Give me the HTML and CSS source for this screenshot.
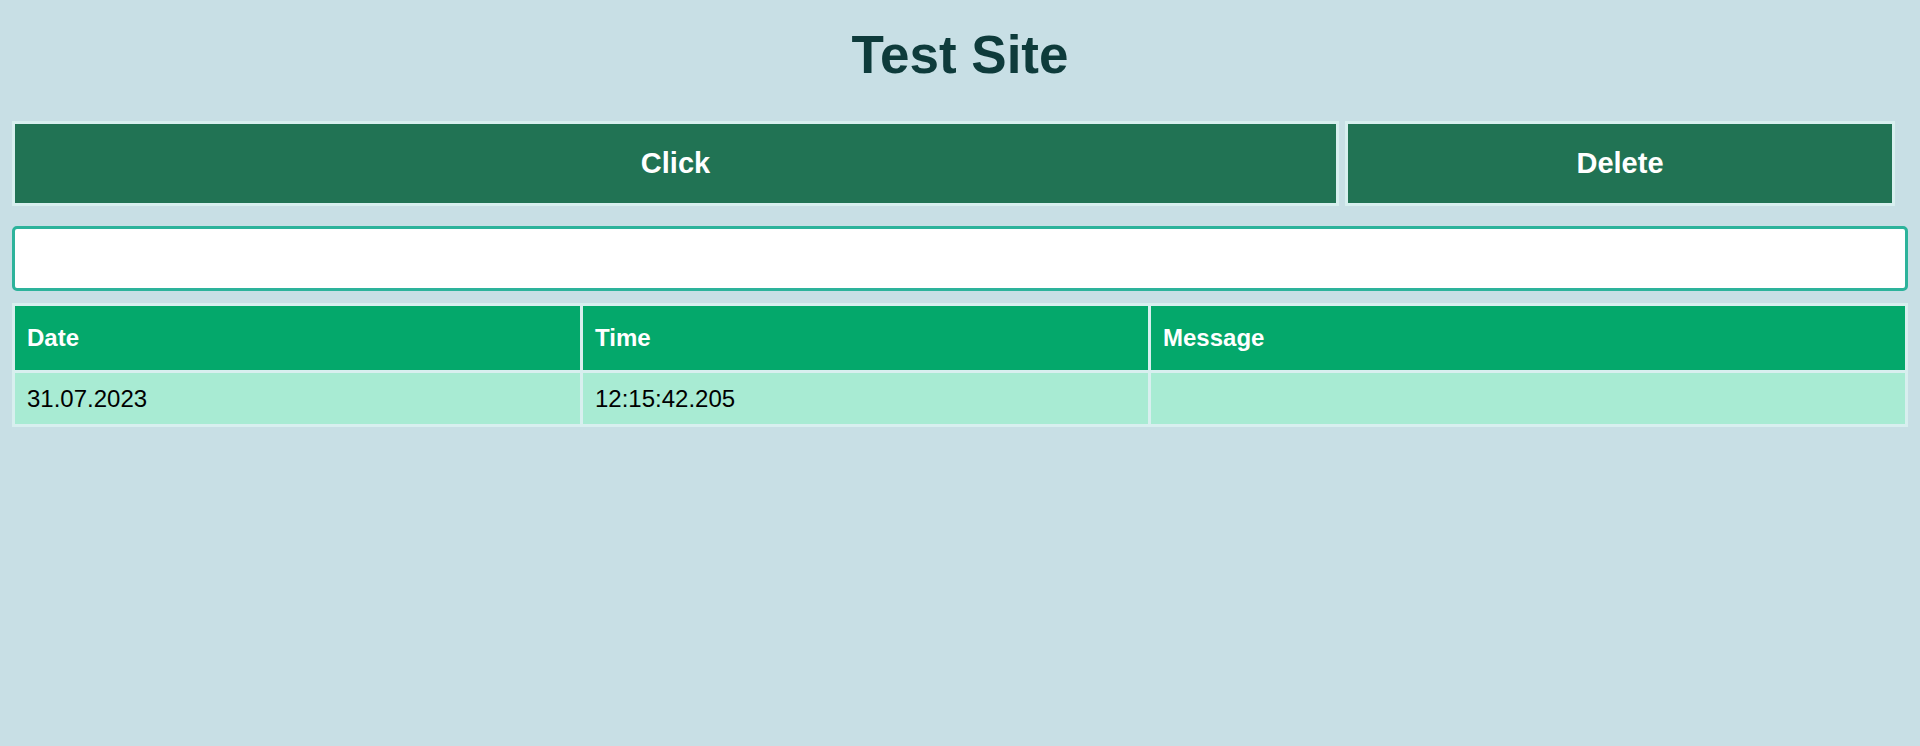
FILE: index.html
```html
<!DOCTYPE html>
<html lang="en">
<head>
<meta charset="utf-8">
<title>Test Site</title>
<link rel="stylesheet" href="styles.css">
</head>
<body>
<div class="page">
  <h1 class="title">Test Site</h1>
  <div class="actions">
    <button class="btn btn-click">Click</button>
    <button class="btn btn-delete">Delete</button>
  </div>
  <input class="message-input" type="text">
  <table class="log">
    <colgroup>
      <col class="col-date">
      <col class="col-time">
      <col class="col-msg">
    </colgroup>
    <thead>
      <tr><th>Date</th><th>Time</th><th>Message</th></tr>
    </thead>
    <tbody>
      <tr><td>31.07.2023</td><td>12:15:42.205</td><td></td></tr>
    </tbody>
  </table>
</div>
</body>
</html>
```

FILE: styles.css
```css
html, body {
  margin: 0;
  padding: 0;
  background: #c8dfe5;
  font-family: "Liberation Sans", Arial, sans-serif;
}

.page {
  padding: 25px 12px 0;
  display: flex;
  flex-direction: column;
}

.title {
  margin: 0 0 36px;
  font-size: 53px;
  line-height: 60px;
  font-weight: bold;
  text-align: center;
  color: #0e3b3b;
}

.actions {
  display: flex;
  gap: 6px;
  margin-bottom: 20px;
}

.btn {
  box-sizing: border-box;
  height: 85px;
  border: 3px solid #d8efef;
  background: #217354;
  color: #ffffff;
  font-family: "Liberation Sans", Arial, sans-serif;
  font-size: 29px;
  font-weight: bold;
  padding: 0;
  margin: 0;
  display: flex;
  align-items: center;
  justify-content: center;
}

.btn-click { width: 1327px; }
.btn-delete { width: 550px; }

.message-input {
  box-sizing: border-box;
  width: 100%;
  height: 65px;
  margin: 0 0 12px;
  border: 3px solid #2db39b;
  border-radius: 5px;
  background: #ffffff;
  outline: none;
}

.log {
  width: 100%;
  table-layout: fixed;
  border-collapse: separate;
  border-spacing: 3px;
  background: #d8efef;
  font-size: 24px;
}

.col-date { width: 565px; }
.col-time { width: 565px; }

.log th,
.log td {
  padding: 0 12px;
  text-align: left;
  vertical-align: middle;
}

.log th {
  height: 64px;
  background: #04a86b;
  color: #ffffff;
  font-weight: bold;
}

.log td {
  height: 51px;
  background: #a8ebd3;
  color: #000000;
}
```
